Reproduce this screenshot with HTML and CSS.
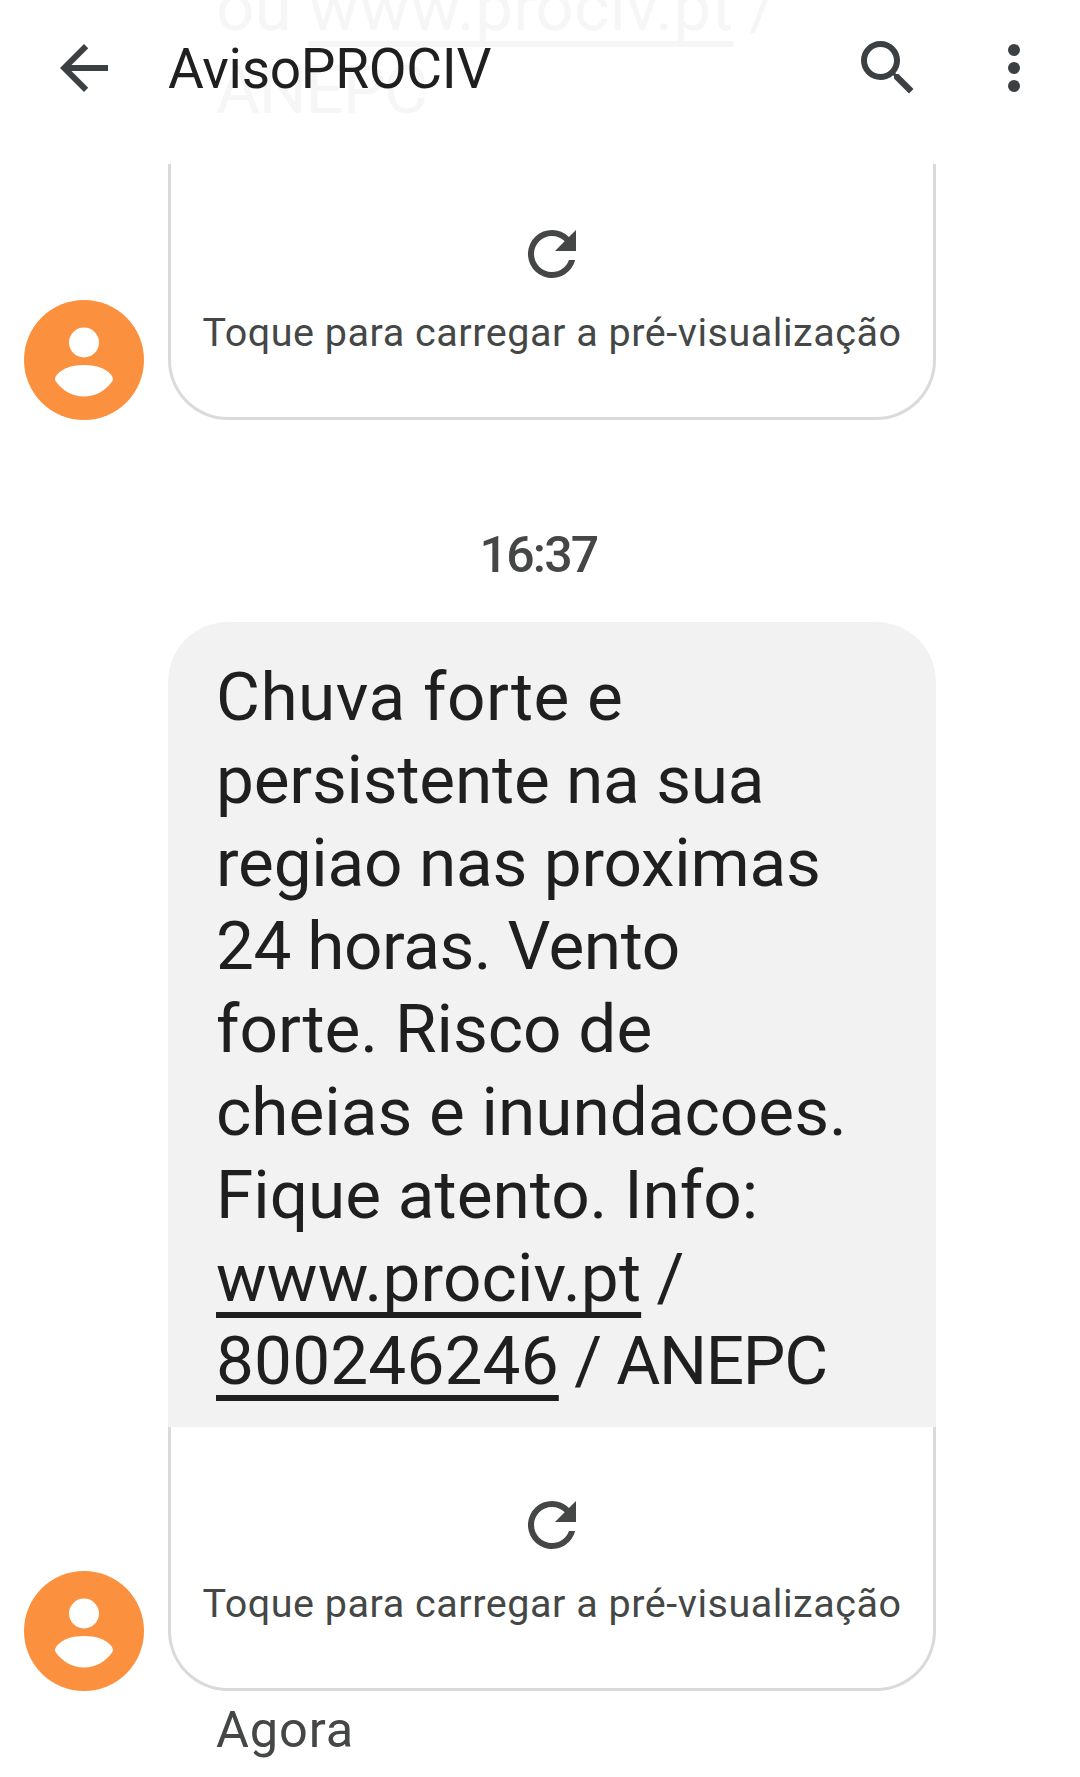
FILE: index.html
```html
<!DOCTYPE html>
<html lang="pt">
<head>
<meta charset="utf-8">
<title>AvisoPROCIV</title>
<link rel="stylesheet" href="styles.css">
</head>
<body>
<svg class="defs" aria-hidden="true">
  <symbol id="avatar" viewBox="0 0 120 120">
    <circle cx="60" cy="60" r="60" fill="#fb903e"/>
    <circle cx="60" cy="42.500" r="15" fill="#fff"/>
    <path d="M31.500 77C35.500 69.500 46 65 60 65s24.500 4.500 28.500 12q1.200 2.300 0 4C81 91.500 71 96.500 60 96.500S39 91.500 31.500 81q-1.200-1.700 0-4z" fill="#fff"/>
  </symbol>
  <symbol id="refresh" viewBox="0 0 24 24">
    <path d="M17.650 6.350A7.958 7.958 0 0 0 12 4a8 8 0 1 0 7.730 10h-2.080A5.990 5.990 0 0 1 12 18c-3.310 0-6-2.690-6-6s2.690-6 6-6c1.660 0 3.140.69 4.220 1.780L13 11h7V4l-2.350 2.350z"/>
  </symbol>
</svg>
<div class="screen">
  <header class="topbar">
    <svg class="icon" viewBox="0 0 24 24"><path d="M20 11H7.830l5.590-5.590L12 4l-8 8 8 8 1.410-1.410L7.830 13H20v-2z"/></svg>
    <h1 class="title">AvisoPROCIV</h1>
    <svg class="icon" viewBox="0 0 24 24"><path d="M15.500 14h-.79l-.28-.27A6.471 6.471 0 0 0 16 9.500 6.500 6.500 0 1 0 9.500 16c1.610 0 3.090-.59 4.230-1.570l.27.28v.79l5 4.990L20.490 19l-4.990-5zm-6 0C7.010 14 5 11.990 5 9.500S7.010 5 9.500 5 14 7.010 14 9.500 11.990 14 9.500 14z"/></svg>
    <svg class="icon icon-more" viewBox="0 0 24 24"><circle cx="12" cy="6" r="2"/><circle cx="12" cy="12" r="2"/><circle cx="12" cy="18" r="2"/></svg>
  </header>
  <main class="thread">
    <article class="message">
      <svg class="avatar"><use href="#avatar"/></svg>
      <div class="stack">
        <p class="bubble">
          <span class="line">ou <a class="link">www.prociv.pt</a><span class="tight"> /</span></span>
          <span class="line tight">ANEPC</span>
        </p>
        <div class="preview">
          <svg class="refresh"><use href="#refresh"/></svg>
          <span class="preview-label">Toque para carregar a pré-visualização</span>
        </div>
      </div>
    </article>
    <time class="time">16:37</time>
    <article class="message">
      <svg class="avatar"><use href="#avatar"/></svg>
      <div class="stack">
        <p class="bubble">
          <span class="line wide">Chuva forte e</span>
          <span class="line snug">persistente na sua</span>
          <span class="line snug">regiao nas proximas</span>
          <span class="line snugger">24 horas. Vento</span>
          <span class="line">forte. Risco de</span>
          <span class="line">cheias e inundacoes.</span>
          <span class="line">Fique atento. Info:</span>
          <span class="line"><a class="link">www.prociv.pt</a><span class="tight"> /</span></span>
          <span class="line"><a class="link">800246246</a><span class="tight"> / ANEPC</span></span>
        </p>
        <div class="preview">
          <svg class="refresh"><use href="#refresh"/></svg>
          <span class="preview-label">Toque para carregar a pré-visualização</span>
        </div>
      </div>
    </article>
    <p class="status">Agora</p>
  </main>
</div>
</body>
</html>
```
FILE: styles.css
```css
* { box-sizing: border-box; margin: 0; padding: 0; }

body {
  background: #fff;
  color: #1f1f1f;
  font-family: Roboto, "Liberation Sans", sans-serif;
}

.defs { position: absolute; width: 0; height: 0; }

.screen {
  position: relative;
  width: 1080px;
  height: 1777px;
  overflow: hidden;
}

/* Translucent bar over the scrolled thread */
.topbar {
  position: absolute;
  inset: 0 0 auto;
  z-index: 1;
  display: flex;
  align-items: center;
  height: 164px;
  padding: 0 30px 28px 48px;
  background: rgba(255, 255, 255, .96);
}

.icon { flex: none; width: 72px; height: 72px; fill: #3c4043; }
.icon-more { margin-left: 54px; }

.title {
  flex: 1;
  padding: 1px 0 0 48px;
  font-size: 55px;
  font-weight: 400;
  line-height: 72px;
  letter-spacing: -.3px;
}

/* Newest message sits at the bottom, older ones run off the top */
.thread {
  display: flex;
  flex-direction: column;
  justify-content: flex-end;
  height: 100%;
  padding-bottom: 17px;
}

.message {
  display: flex;
  flex: none;
  align-items: flex-end;
  gap: 24px;
  padding-left: 24px;
}

.avatar { flex: none; width: 120px; height: 120px; }
.stack { width: 768px; }

.bubble {
  padding: 33px 48px 25px;
  border-radius: 60px 60px 0 0;
  background: #f2f2f2;
  font-size: 67.5px;
  line-height: 83px;
}

.line { display: block; white-space: nowrap; }
.wide { letter-spacing: .5px; }
.snug { letter-spacing: -.2px; }
.snugger { letter-spacing: -.45px; }
.tight { letter-spacing: -1.3px; }

.link {
  letter-spacing: .15px;
  text-decoration: underline;
  text-decoration-thickness: 6px;
  text-decoration-skip-ink: none;
  text-underline-offset: 11px;
}

.preview {
  display: flex;
  flex-direction: column;
  align-items: center;
  gap: 20px;
  height: 264px;
  padding-top: 62px;
  border: 3px solid #dadada;
  border-top: 0;
  border-radius: 0 0 60px 60px;
  color: #444746;
}

.refresh { width: 72px; height: 72px; fill: #444746; }

.preview-label {
  font-size: 39.5px;
  line-height: 46px;
  letter-spacing: .53px;
  white-space: nowrap;
}

.time {
  margin: 105px 0 37px;
  padding-right: 3px;
  color: #444746;
  font-size: 50px;
  font-weight: 500;
  line-height: 60px;
  letter-spacing: -1.8px;
  text-align: center;
}

.status {
  margin: 9px 0 0 216px;
  color: #444746;
  font-size: 50.5px;
  line-height: 60px;
  letter-spacing: .9px;
}
```
